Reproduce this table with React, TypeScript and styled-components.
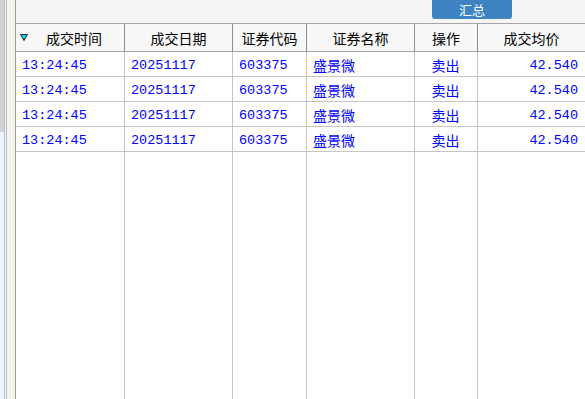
import React from 'react'
import styled, { createGlobalStyle } from 'styled-components'

const GlobalStyle = createGlobalStyle`
  html, body {
    margin: 0;
    padding: 0;
    overflow: hidden;
    background: #ffffff;
  }
  * {
    box-sizing: border-box;
  }
`

const CELL_FONT = `"Liberation Mono", "Noto Sans CJK SC", monospace`
const HEAD_FONT = `"Noto Sans CJK SC", "Liberation Sans", sans-serif`

type Align = 'left' | 'center' | 'right'

type Column = {
  key: keyof Trade
  title: string
  width: number
  align: Align
}

type Trade = {
  time: string
  date: string
  code: string
  name: string
  side: string
  price: string
}

const columns: Column[] = [
  { key: 'time', title: '成交时间', width: 109, align: 'left' },
  { key: 'date', title: '成交日期', width: 108, align: 'left' },
  { key: 'code', title: '证券代码', width: 74, align: 'left' },
  { key: 'name', title: '证券名称', width: 108, align: 'left' },
  { key: 'side', title: '操作', width: 63, align: 'center' },
  { key: 'price', title: '成交均价', width: 108, align: 'right' },
]

const trade: Trade = {
  time: '13:24:45',
  date: '20251117',
  code: '603375',
  name: '盛景微',
  side: '卖出',
  price: '42.540',
}

const trades: Trade[] = [trade, trade, trade, trade]

const Page = styled.div`
  display: flex;
  flex-direction: row;
  width: 100vw;
  height: 100vh;
  overflow: hidden;
`

// left splitter strip: outer edge, two thin rules, cream gutter
const Edge = styled.div`
  display: flex;
  flex-direction: row;
  flex-shrink: 0;
  height: 100%;
`

const EdgeOuter = styled.div`
  width: 4px;
  background: linear-gradient(to bottom, #d3d3d3 0, #d3d3d3 132px, #eef4fb 132px);
`

const EdgeRule = styled.div<{ light?: boolean }>`
  width: 1px;
  background: ${(p) => (p.light ? '#f3f6fa' : '#b4bfcd')};
`

const Gutter = styled.div`
  width: 8px;
  background: #f5f4ea;
`

const Main = styled.div`
  flex: 1;
  display: flex;
  flex-direction: column;
  min-width: 0;
  border-left: 1px solid #9c9c9c;
  overflow: hidden;
`

const TopBar = styled.div`
  height: 23px;
  flex-shrink: 0;
  background: #f5f5f5;
  display: flex;
  align-items: flex-start;
  padding-left: 416px;
`

const SumButton = styled.div`
  width: 80px;
  height: 19px;
  background: #3f84c2;
  border-radius: 0 0 3px 3px;
  color: #ffffff;
  font-family: ${HEAD_FONT};
  font-size: 13px;
  line-height: 19px;
  text-align: center;
`

const HeaderRow = styled.div`
  display: flex;
  flex-direction: row;
  flex-shrink: 0;
  height: 29px;
  background: #f7f7f7;
  border-top: 1px solid #a4a4a4;
  border-bottom: 1px solid #a4a4a4;
`

const HeaderCell = styled.div<{ w: number; sorted?: boolean }>`
  position: relative;
  width: ${(p) => p.w}px;
  flex-shrink: 0;
  height: 100%;
  border-right: 1px solid #8e8e8e;
  display: flex;
  align-items: center;
  justify-content: center;
  padding-left: ${(p) => (p.sorted ? 8 : 0)}px;
  font-family: ${HEAD_FONT};
  font-size: 14px;
  color: #000000;
  white-space: nowrap;
`

const SortMark = styled.svg`
  position: absolute;
  left: 4px;
  top: 10px;
`

const Body = styled.div`
  flex: 1;
  display: flex;
  flex-direction: column;
  background: #ffffff;
`

const Row = styled.div<{ filler?: boolean }>`
  display: flex;
  flex-direction: row;
  flex-shrink: 0;
  height: 25px;
  border-bottom: 1px solid #c6c6c6;
  ${(p) => p.filler && 'flex: 1; border-bottom: none;'}
`

const Cell = styled.div<{ w: number; align: Align; cjk?: boolean }>`
  width: ${(p) => p.w}px;
  flex-shrink: 0;
  height: 100%;
  border-right: 1px solid #c6c6c6;
  display: flex;
  align-items: center;
  justify-content: ${(p) => (p.align === 'left' ? 'flex-start' : p.align === 'right' ? 'flex-end' : 'center')};
  padding: 2px 7px 0 6px;
  font-family: ${(p) => (p.cjk ? HEAD_FONT : CELL_FONT)};
  font-size: ${(p) => (p.cjk ? 14 : 13.5)}px;
  color: #0000ff;
  white-space: nowrap;
`

const isCjk = (key: keyof Trade) => key === 'name' || key === 'side'

const App = () => {
  return (
    <Page>
      <GlobalStyle />
      <Edge>
        <EdgeOuter />
        <EdgeRule />
        <EdgeRule light />
        <EdgeRule />
        <Gutter />
      </Edge>
      <Main>
        <TopBar>
          <SumButton>汇总</SumButton>
        </TopBar>
        <HeaderRow>
          {columns.map((col, i) => (
            <HeaderCell key={col.key} w={col.width} sorted={i === 0}>
              {i === 0 && (
                <SortMark width="8" height="7" viewBox="0 0 8 7">
                  <polygon points="0.5,0.5 7.5,0.5 4,6.5" fill="#12d6ea" stroke="#1a1a1a" strokeWidth="1" />
                </SortMark>
              )}
              {col.title}
            </HeaderCell>
          ))}
        </HeaderRow>
        <Body>
          {trades.map((t, r) => (
            <Row key={r}>
              {columns.map((col) => (
                <Cell key={col.key} w={col.width} align={col.align} cjk={isCjk(col.key)}>
                  {t[col.key]}
                </Cell>
              ))}
            </Row>
          ))}
          <Row filler>
            {columns.map((col) => (
              <Cell key={col.key} w={col.width} align={col.align} />
            ))}
          </Row>
        </Body>
      </Main>
    </Page>
  )
}

export default App
